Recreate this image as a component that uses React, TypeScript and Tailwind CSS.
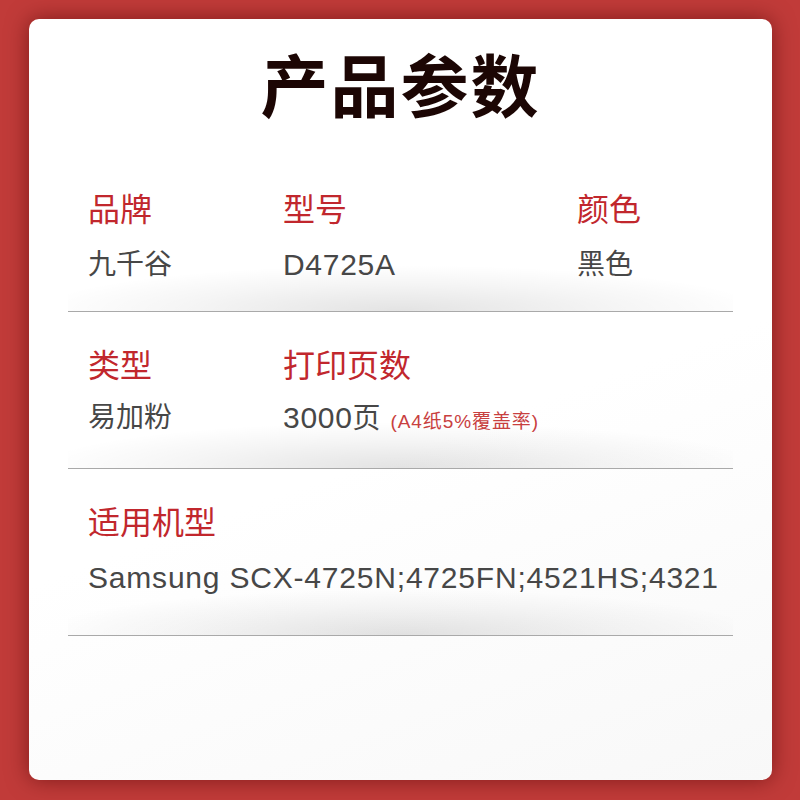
import React from "react";

const cjk = { fontFamily: '"Liberation Sans", "Noto Sans CJK SC", sans-serif' };

function Shade() {
  return (
    <div className="pointer-events-none absolute inset-x-0 bottom-0 h-[46px] bg-[radial-gradient(ellipse_55%_100%_at_50%_100%,rgba(0,0,0,0.11),rgba(0,0,0,0.04)_60%,transparent_100%)]" />
  );
}

const label = "text-[32px] leading-[32px] text-[#c1272d]";
const valueCn = "mt-[22px] h-[28px] text-[28px] leading-[28px] text-[#474747]";
const latin = "text-[30px] tracking-[0.7px]";

export default function App() {
  return (
    <div className="w-[800px] h-[800px] bg-[#c13b39] pt-[19px] pl-[29px] pr-[28px] pb-[20px]" style={cjk}>
      <div className="h-full w-full rounded-[10px] bg-[linear-gradient(160deg,#ffffff_55%,#f8f8f8_100%)] shadow-[0_0_22px_rgba(70,0,0,0.55)] px-[39px] pt-[35px]">
        <h1 className="text-center text-[68px] leading-[68px] font-bold text-[#1c0604] tracking-[2px]">产品参数</h1>

        <div className="relative mt-[34px] border-b border-[#a9a9a9] h-[156px] pl-[20px] pt-[38px] grid grid-cols-[195px_294px_1fr]">
          <Shade />
          <div className="relative">
            <div className={label}>品牌</div>
            <div className={valueCn + " translate-y-[3px]"}>九千谷</div>
          </div>
          <div className="relative">
            <div className={label}>型号</div>
            <div className={valueCn + " translate-y-[3px]"}><span className={latin}>D4725A</span></div>
          </div>
          <div className="relative">
            <div className={label}>颜色</div>
            <div className={valueCn + " translate-y-[3px]"}>黑色</div>
          </div>
        </div>

        <div className="relative border-b border-[#a9a9a9] h-[157px] pl-[20px] pt-[38px] grid grid-cols-[195px_1fr]">
          <Shade />
          <div className="relative">
            <div className={label}>类型</div>
            <div className={valueCn}>易加粉</div>
          </div>
          <div className="relative">
            <div className={label}>打印页数</div>
            <div className={valueCn + " whitespace-nowrap"}>
              <span className={latin}>3000</span>页<span className="ml-[10px] text-[19px] tracking-[0.9px] text-[#c8403f]">(A4纸5%覆盖率)</span>
            </div>
          </div>
        </div>

        <div className="relative border-b border-[#a9a9a9] h-[167px] pl-[20px] pt-[38px]">
          <Shade />
          <div className="relative">
            <div className={label}>适用机型</div>
            <div className="mt-[25px] text-[30px] leading-[28px] tracking-[0.8px] text-[#474747] whitespace-nowrap">Samsung SCX-4725N;4725FN;4521HS;4321</div>
          </div>
        </div>
      </div>
    </div>
  );
}
